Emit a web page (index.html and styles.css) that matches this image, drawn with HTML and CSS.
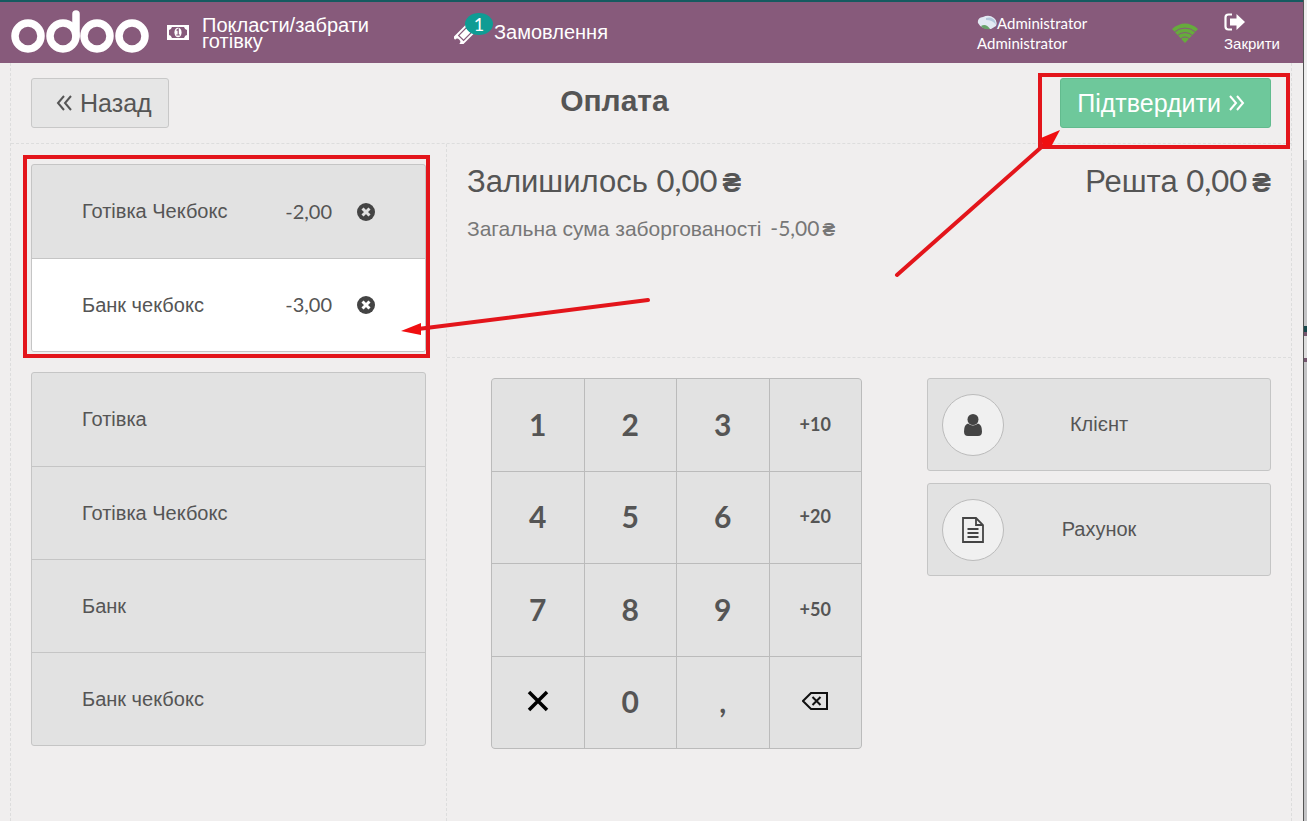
FILE: index.html
```html
<!DOCTYPE html>
<html lang="uk">
<head>
    <meta charset="UTF-8">
    <meta name="viewport" content="width=device-width, initial-scale=1.0">
    <title>Оплата</title>
    <link rel="stylesheet" href="styles.css">
</head>
<body>
    <div class="pos">
        <header class="topbar">
            <svg class="logo" width="140" height="46" viewBox="0 0 140 46" role="img" aria-label="odoo">
                <g fill="none" stroke="#fff" stroke-width="7.500">
                    <circle cx="18" cy="26" r="13"/>
                    <circle cx="53" cy="26" r="13"/>
                    <circle cx="87" cy="26" r="13"/>
                    <circle cx="122" cy="26" r="13"/>
                    <path d="M66 26V4" stroke-linecap="round"/>
                </g>
            </svg>
            <button class="top-button cash">
                <svg width="22" height="15" viewBox="0 0 22 15">
                    <path fill="#fff" fill-rule="evenodd" d="M0 0h22v15H0zM5 2Q4 5 2 5v5q2 0 3 3h12q1-3 3-3V5q-2 0-3-3z"/>
                    <ellipse cx="11" cy="7.500" rx="3.600" ry="4.800" fill="#fff"/>
                    <path d="M9.600 5.500L11.200 4.200V9.800M9.300 10h3.600" fill="none" stroke="#875a7b" stroke-width="1.200"/>
                </svg>
                <span class="cash-label">Покласти/забрати готівку</span>
            </button>
            <button class="top-button orders">
                <span class="ticket">
                    <svg width="22" height="22" viewBox="0 0 22 22">
                        <g transform="rotate(-45 11 12)">
                            <path fill="#fff" d="M0 6h22v3a3 3 0 0 0 0 6v3H0v-3a3 3 0 0 0 0-6z"/>
                            <path fill="#fff" stroke="#875a7b" stroke-width="1.200" d="M5.500 8.500h11v7h-11z"/>
                        </g>
                    </svg>
                    <span class="badge">1</span>
                </span>
                <span>Замовлення</span>
            </button>
            <div class="user">
                <div class="user-row">
                    <svg width="20" height="15" viewBox="0 0 20 15">
                        <path fill="#e3eaf4" d="M1 8Q0 3 6 2Q12-1 17 3Q21 6 19 11L14 14Q4 14 1 8z"/>
                        <path fill="#b3c8dc" d="M9 3q6-2 9 3l1 4q-3-5-10-5z"/>
                        <path fill="#69a36b" d="M4 11q5-3 9 3q-6 1-9-3z"/>
                    </svg><span class="user-alt">Administrator</span>
                </div>
                <div>Administrator</div>
            </div>
            <svg class="wifi" width="26" height="20" viewBox="0 0 26 20">
                <path fill="#66ab3c" d="M0 6Q13-5 26 6L13 20z"/>
                <g fill="none" stroke="#875a7b" stroke-width="1">
                    <path d="M2.500 9a16 16 0 0 1 21 0"/>
                    <path d="M5.500 12.500a11 11 0 0 1 15 0"/>
                    <path d="M8.500 16a6 6 0 0 1 9 0"/>
                </g>
            </svg>
            <button class="top-button close">
                <svg width="22" height="18" viewBox="0 0 22 18">
                    <path d="M8 1.500H4.500Q1.500 1.500 1.500 4.500v9q0 3 3 3H8" fill="none" stroke="#fff" stroke-width="2.200"/>
                    <path fill="#fff" d="M6 5.500h6.500V1L21 9l-8.500 8v-4.500H6z"/>
                </svg>
                <span>Закрити</span>
            </button>
        </header>

        <main class="screen">
            <div class="screen-top">
                <button class="nav-button">
                    <svg width="16" height="16" viewBox="0 0 16 16"><path d="M8 1L2 8l6 7M15 1L9 8l6 7"/></svg>
                    Назад
                </button>
                <h1>Оплата</h1>
                <button class="nav-button next">
                    Підтвердити
                    <svg width="16" height="16" viewBox="0 0 16 16"><path d="M1 1l6 7-6 7M8 1l6 7-6 7"/></svg>
                </button>
            </div>

            <div class="columns">
                <section class="left">
                    <div class="list">
                        <div class="row line">
                            <span class="name">Готівка Чекбокс</span>
                            <span class="amount">-2,00</span>
                            <button class="remove" aria-label="Видалити">
                                <svg width="18" height="18" viewBox="0 0 18 18"><circle cx="9" cy="9" r="9" fill="#444"/><path d="M5.500 5.500l7 7M12.500 5.500l-7 7" stroke="#e2e2e2" stroke-width="3"/></svg>
                            </button>
                        </div>
                        <div class="row line selected">
                            <span class="name">Банк чекбокс</span>
                            <span class="amount">-3,00</span>
                            <button class="remove" aria-label="Видалити">
                                <svg width="18" height="18" viewBox="0 0 18 18"><circle cx="9" cy="9" r="9" fill="#444"/><path d="M5.500 5.500l7 7M12.500 5.500l-7 7" stroke="#fff" stroke-width="3"/></svg>
                            </button>
                        </div>
                    </div>
                    <div class="list">
                        <button class="row">Готівка</button>
                        <button class="row">Готівка Чекбокс</button>
                        <button class="row">Банк</button>
                        <button class="row">Банк чекбокс</button>
                    </div>
                </section>

                <section class="right">
                    <div class="status">
                        <div>
                            <div class="remaining">Залишилось <span class="num">0,00</span><b class="cur">₴</b></div>
                            <div class="due">Загальна сума заборгованості <span class="num due-sum">-5,00</span><b class="cur">₴</b></div>
                        </div>
                        <div class="remaining">Решта <span class="num">0,00</span><b class="cur">₴</b></div>
                    </div>
                    <div class="controls">
                        <div class="numpad">
                            <button>1</button>
                            <button>2</button>
                            <button>3</button>
                            <button class="mode">+10</button>
                            <button>4</button>
                            <button>5</button>
                            <button>6</button>
                            <button class="mode">+20</button>
                            <button>7</button>
                            <button>8</button>
                            <button>9</button>
                            <button class="mode">+50</button>
                            <button aria-label="Очистити">
                                <svg width="22" height="22" viewBox="0 0 22 22"><path d="M2 2l18 18M20 2L2 20" stroke="#000" stroke-width="3.500"/></svg>
                            </button>
                            <button>0</button>
                            <button>,</button>
                            <button aria-label="Стерти">
                                <svg width="26" height="18" viewBox="0 0 26 18" fill="none" stroke="#111" stroke-width="2"><path d="M9 1h16v16H9L1 9z"/><path d="M10.500 5l8 8M18.500 5l-8 8"/></svg>
                            </button>
                        </div>
                        <div class="actions">
                            <button class="action">
                                <span class="circle">
                                    <svg width="18" height="22" viewBox="0 0 18 22" fill="#444"><circle cx="9" cy="5.500" r="5.500"/><path d="M4 9.500q5 4 10 0Q18 10.500 18 17.500q0 4.500-4 4.500H4q-4 0-4-4.500Q0 10.500 4 9.500z"/></svg>
                                </span>
                                <span class="action-label">Клієнт</span>
                            </button>
                            <button class="action">
                                <span class="circle">
                                    <svg width="22" height="26" viewBox="0 0 22 26" fill="none" stroke="#444" stroke-width="1.800"><path d="M1 1h13l7 7v17H1z"/><path d="M14 1v7h7M5.500 12h11M5.500 16h11M5.500 20h11"/></svg>
                                </span>
                                <span class="action-label">Рахунок</span>
                            </button>
                        </div>
                    </div>
                </section>
            </div>
        </main>

        <!-- red marks drawn over the screen -->
        <svg class="marks" width="1304" height="400" viewBox="0 0 1304 400">
            <g fill="none" stroke="#e3151b" stroke-width="4">
                <path d="M25 157h403v199H25z"/>
                <path d="M1040 75h248v72H1040z"/>
                <path stroke-linecap="round" d="M648 300L418 329"/>
                <path stroke-linecap="round" d="M897 275L1046 143"/>
            </g>
            <path fill="#f00e10" d="M401 331l20-8v12z"/>
            <path fill="#f00e10" d="M1060 130l-19 8 2 9h8z"/>
        </svg>
    </div>
    <div class="edge"></div>
</body>
</html>
```
FILE: styles.css
```css
* {
    box-sizing: border-box;
}

body {
    margin: 0;
    display: flex;
    min-height: 100vh;
    background: #f0eeee;
    color: #555;
    font-family: "Liberation Sans", Arial, sans-serif;
    font-size: 20px;
}

button {
    font: inherit;
    color: inherit;
    border: 0;
    margin: 0;
    padding: 0;
    background: none;
    cursor: pointer;
}

.pos {
    position: relative;
    flex: 1;
    display: flex;
    flex-direction: column;
}

.edge {
    width: 4px;
    border-left: 1px solid #555;
    background: linear-gradient(#eee 160px, #c4c4c6 160px 326px, #17484c 326px 332px, #75566e 332px 336px, #ddd 336px 358px, #75566e 358px 362px, #c4c4c6 362px);
}

/* top bar */
.topbar {
    display: flex;
    align-items: center;
    height: 63px;
    padding: 0 23px 0 10px;
    border-top: 2px solid #155a60;
    background: #875a7b;
    color: #fff;
}

.top-button {
    display: flex;
    align-items: center;
    text-align: left;
}

.cash {
    width: 287px;
    gap: 13px;
    margin-left: 17px;
}

.cash-label {
    width: 180px;
    line-height: 16px;
}

.ticket {
    position: relative;
    width: 40px;
    height: 22px;
}

.badge {
    position: absolute;
    left: 11px;
    top: -9px;
    width: 28px;
    height: 22px;
    border-radius: 50%;
    background: #0f9c94;
    font-family: Lato, sans-serif;
    font-size: 18px;
    line-height: 22px;
    text-align: center;
}

.user {
    margin-left: auto;
    width: 111px;
    font-family: Lato, sans-serif;
    font-size: 15px;
    line-height: 20px;
}

.user-row {
    display: flex;
    align-items: center;
    overflow: hidden;
}

.wifi {
    margin: 0 26px 0 84px;
}

.close {
    flex-direction: column;
    align-items: flex-start;
    gap: 4px;
    font-size: 15px;
    line-height: 17px;
}

/* payment screen */
.screen {
    flex: 1;
    display: flex;
    flex-direction: column;
    margin: 0 11px 0 10px;
    border: 1px dashed #ddd;
    border-width: 0 1px;
}

.screen-top {
    display: flex;
    justify-content: space-between;
    height: 81px;
    padding: 15px 20px;
    border-bottom: 1px dashed #ddd;
}

h1 {
    margin: 0;
    font-size: 30px;
    line-height: 46px;
}

.nav-button {
    display: flex;
    align-items: center;
    gap: 8px;
    height: 50px;
    padding: 0 16px 0 24px;
    border: 1px solid #c8c8c8;
    border-radius: 3px;
    background: #e6e6e6;
    font-size: 25px;
}

.nav-button path {
    fill: none;
    stroke: currentColor;
    stroke-width: 2;
}

.next {
    padding: 0 25px 0 16px;
    border-color: #62bb8e;
    background: #6ec89b;
    color: #fff;
}

.columns {
    flex: 1;
    display: flex;
}

.left {
    width: 436px;
    padding: 20px;
    border-right: 1px dashed #ddd;
}

.list {
    margin-bottom: 20px;
    border: 1px solid #c5c5c5;
    border-radius: 3px;
    background: #e2e2e2;
    overflow: hidden;
}

.row {
    display: flex;
    align-items: center;
    width: 100%;
    height: 93px;
    padding: 0 50px;
    text-align: left;
}

.row + .row {
    border-top: 1px solid #c5c5c5;
}

.selected {
    background: #fff;
}

.name {
    flex: 1;
}

.amount,
.num {
    font-family: Lato, sans-serif;
}

.amount {
    margin-right: 25px;
    padding-bottom: 2px;
}

.remove {
    display: flex;
}

.right {
    flex: 1;
    display: flex;
    flex-direction: column;
}

.status {
    display: flex;
    justify-content: space-between;
    height: 214px;
    padding: 16px 20px;
    border-bottom: 1px dashed #ddd;
}

.remaining {
    font-size: 31px;
    line-height: 40px;
}

.due {
    margin-top: 16px;
    color: #777;
    font-size: 21px;
    line-height: 20px;
}

.due-sum {
    margin-left: 3px;
}

.cur {
    margin-left: 5px;
    font-size: 28px;
    line-height: 20px;
}

.due .cur {
    margin-left: 3px;
    font-size: 19px;
}

.controls {
    display: flex;
    gap: 65px;
    padding: 20px 20px 20px 44px;
}

.numpad {
    display: grid;
    grid-template: repeat(4, 1fr) / repeat(4, 1fr);
    gap: 1px;
    width: 371px;
    aspect-ratio: 1;
    border: 1px solid #bbb;
    border-radius: 4px;
    background: #bbb;
    overflow: hidden;
}

.numpad button {
    display: flex;
    align-items: center;
    justify-content: center;
    padding-bottom: 2px;
    background: #e2e2e2;
    font-family: Lato, sans-serif;
    font-size: 30px;
    font-weight: bold;
}

.numpad .mode {
    font-size: 18px;
}

.actions {
    flex: 1;
    display: flex;
    flex-direction: column;
    gap: 12px;
}

.action {
    display: flex;
    align-items: center;
    height: 93px;
    padding: 0 14px;
    border: 1px solid #c5c5c5;
    border-radius: 3px;
    background: #e2e2e2;
}

.circle {
    display: flex;
    align-items: center;
    justify-content: center;
    width: 62px;
    height: 62px;
    border: 1px solid #bbb;
    border-radius: 50%;
    background: #f0f0f0;
}

.action-label {
    flex: 1;
    padding-right: 62px;
}

.marks {
    position: absolute;
    left: 0;
    top: 0;
    pointer-events: none;
}
```
